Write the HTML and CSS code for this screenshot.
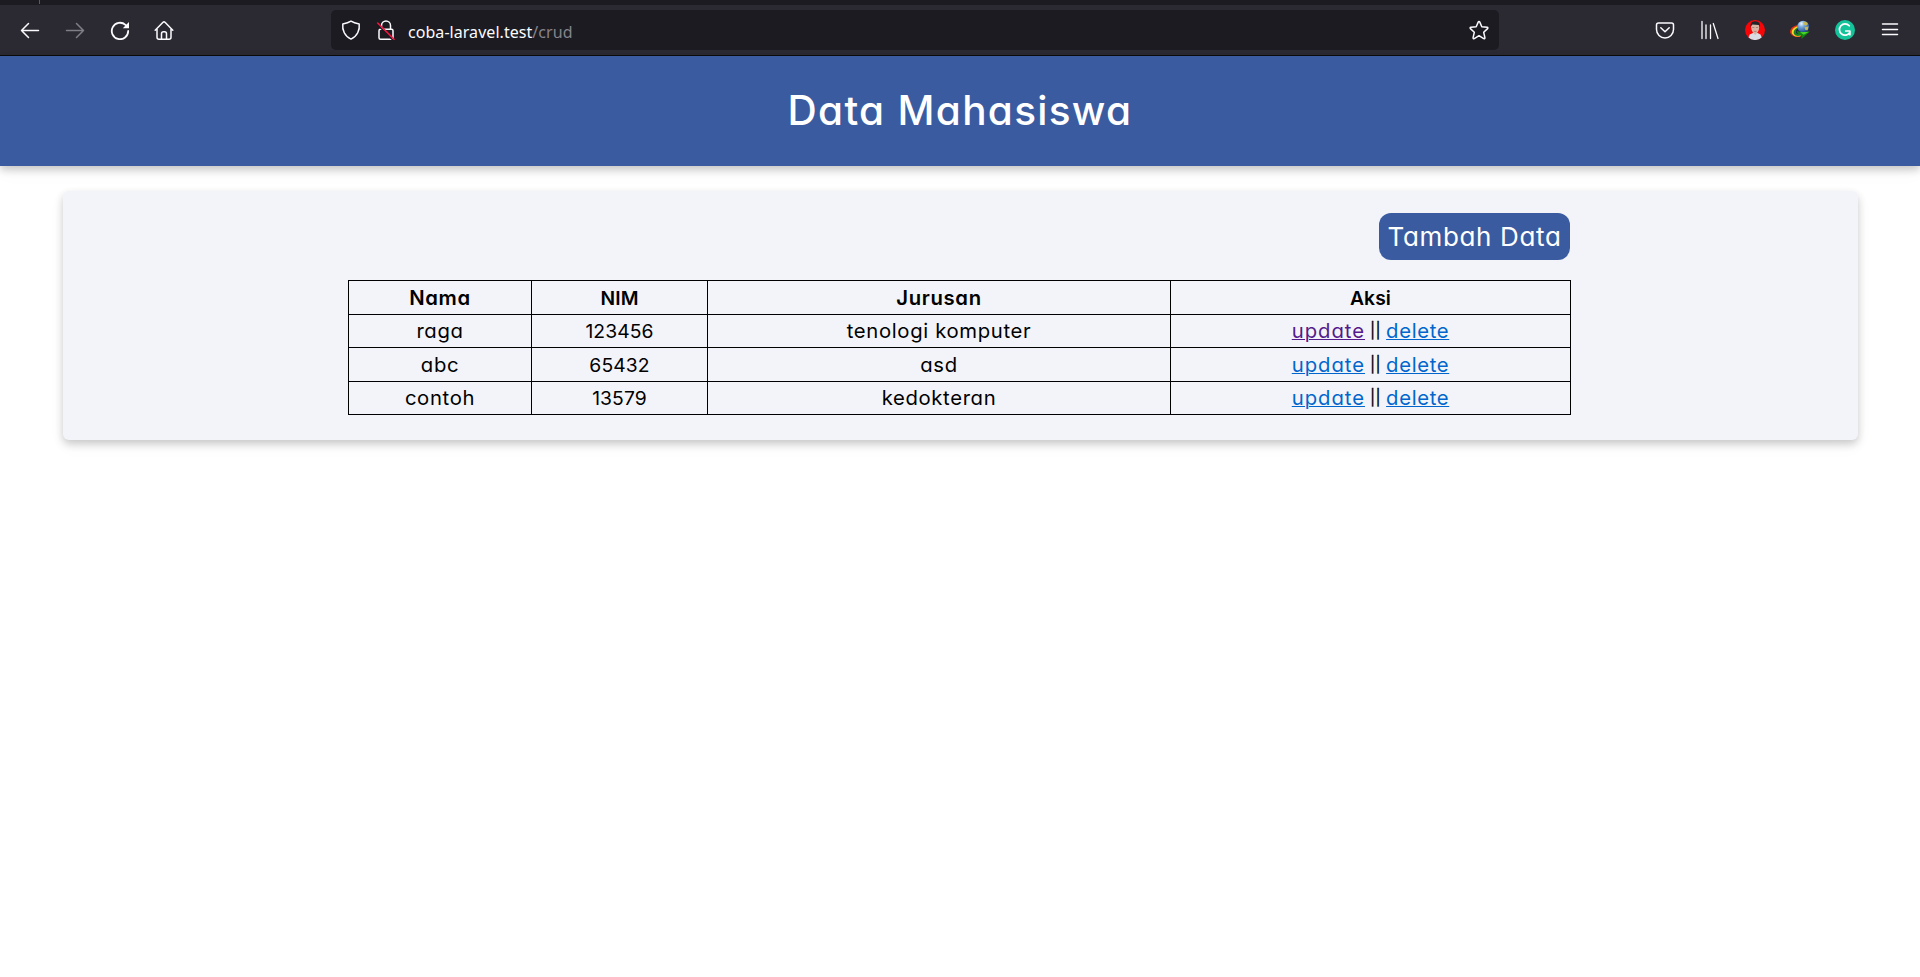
FILE: index.html
```html
<!DOCTYPE html>
<html lang="id">
<head>
<meta charset="utf-8">
<title>Data Mahasiswa</title>
<link rel="stylesheet" href="styles.css">
</head>
<body>
<div class="tabstrip"><span class="tab-edge"></span></div>
<nav class="toolbar">
  <div class="nav-buttons">
    <span class="tool"><svg viewBox="0 0 20 20"><path d="M18.500 10.500H1.500M8.500 3.500L1.500 10.500L8.500 17.500"/></svg></span>
    <span class="tool tool-off"><svg viewBox="0 0 20 20"><path d="M1.500 10.500H18.500M11.500 3.500l7 7L11.500 17.500"/></svg></span>
    <span class="tool"><svg class="bold" viewBox="0 0 20 20"><path d="M18.200 11a8.200 8.200 0 1 1-2.700-6.100L17 6.300"/><path class="solid" d="M19 2v6.200h-6.200z"/></svg></span>
    <span class="tool"><svg viewBox="0 0 20 20"><path d="M1.200 10.200L9 2.300q1-.9 2 0l7.800 7.900M3 9v8.200q0 2 2 2h10q2 0 2-2V9M7.500 19v-5.200q0-2 2-2h1q2 0 2 2V19"/></svg></span>
  </div>
  <div class="urlbar">
    <svg class="shield" viewBox="0 0 20 20"><path d="M10 1.200c2.500 1.600 5 2.200 8.200 2.700.8 6-2 12.500-8.200 15.200C3.800 16.400 1 9.900 1.800 3.900 5 3.400 7.500 2.800 10 1.200z"/></svg>
    <svg class="lock" viewBox="0 0 20 20"><path d="M5.500 9V5.500a4.500 4.500 0 0 1 9 0V9M4.500 9.200h11q1.500 0 1.500 1.500v7q0 1.500-1.500 1.500h-11q-1.500 0-1.500-1.500v-7q0-1.500 1.500-1.500z"/><path class="lock-gap" d="M1.500 4.700L16.500 19.700"/><path class="slash" d="M1.700 3L18 19.300"/></svg>
    <span class="address"><span class="host">coba-laravel.test</span><span class="path">/crud</span></span>
    <svg class="star" viewBox="0 0 20 20"><path d="M10 1.400q.5 0 .8.7l2 4.700 5.300.5q1.300.3.500 1.300l-3.900 3.700 1.200 5.400q0 1.300-1.200.9L10 15.700l-4.700 2.900q-1.200.4-1.200-.9l1.200-5.400L1.400 8.600q-.8-1 .5-1.300l5.300-.5 2-4.700q.3-.7.8-.7z"/></svg>
  </div>
  <div class="extensions">
    <span class="tool"><svg viewBox="0 0 20 20"><path d="M3.500 3h13q2 0 2 2v4.500a8.500 8.500 0 0 1-17 0V5q0-2 2-2zM5.800 7.800L10 11.800l4.200-4"/></svg></span>
    <span class="tool"><svg class="books" viewBox="0 0 20 20"><path d="M2 1.500v17M6 5v13.500M10.500 5v13.500M13.300 3.500l4.700 15"/></svg></span>
    <span class="tool"><svg class="picture" viewBox="0 0 20 20"><circle cx="10" cy="10" r="10" fill="#f80508"/><path d="M3.500 17.600L4.700 14.500 8 13h4.500l3 1.500 1.200 3A10 10 0 0 1 3.500 17.600z" fill="#d9dce2"/><path d="M6 7q0-4 4.200-4t4 4.300q0 3-1.600 5L10.200 15 8 12.700Q6.300 10.500 6 7z" fill="#d9b3a3"/><path d="M5.700 7.500Q4.700 1 10 1.200q5.800-.3 4.700 6.100L13.800 5 7.500 4.500 6.500 5.600z" fill="#20242a"/><path d="M7.600 7.500H9M11.300 7.500h1.500M9.200 11.400h2" stroke="#8f665b" stroke-width=".6"/></svg></span>
    <span class="tool"><svg class="picture" viewBox="0 0 20 20"><defs><radialGradient id="globe" cx=".35" cy=".25" r=".8"><stop offset="0" stop-color="#eaf6ff"/><stop offset=".35" stop-color="#78a9db"/><stop offset="1" stop-color="#143d86"/></radialGradient></defs><path d="M9 5C2 5.500-1 10 .5 13.500c2 3.500 7 4.500 11 2.500l-1.500-3C6 13.500 6 10 9 7z" fill="#e62d1c"/><path d="M8.500 6C3.500 7 1 10.500 2 13.500c2 3.500 6 3.500 9 2.500l-1-2C6 14 5.500 10.500 8.500 8z" fill="#f5dc20"/><path d="M8 7.600C4.500 9 3 11.500 4 14c1.500 2.500 4.500 2 6.500 1.500V13C7 13.500 6 10.500 8 9z" fill="#1d7d2e"/><path d="M8.500 8C6 9 5.500 12 6.500 13.500L10 14l.5-3z" fill="#14233f"/><circle cx="13.200" cy="6.700" r="6" fill="url(#globe)"/><path d="M13.500 2q3-1 4.500 2l-2 1.700-2-1zM14.500 7l4-.5-.8 3.800-2.300-.3z" fill="#c6b857"/><path d="M6.500 11q6 1.500 13.500.5l-8.500 7.500.2-3.300q-3.700-.7-5.200-4.700z" fill="#0f8512"/><path d="M10 12.300l9-.6-5.300 3z" fill="#4bd326"/></svg></span>
    <span class="tool"><svg class="picture" viewBox="0 0 20 20"><circle cx="10" cy="10" r="10" fill="#15c39a"/><path d="M14.200 5.800A5.600 5.600 0 1 0 14.800 12.500M10.700 11h4.200v3.700" fill="none" stroke="#fff" stroke-width="1.700"/></svg></span>
    <span class="tool"><svg class="menu" viewBox="0 0 20 20"><path d="M2.500 4h15M2.500 9.500h15M2.500 14.500h15"/></svg></span>
  </div>
</nav>
<header class="page-header"><h1>Data Mahasiswa</h1></header>
<main class="card">
  <div class="content">
    <div class="actions"><a class="add">Tambah Data</a></div>
    <table class="students">
      <colgroup><col class="col-name"><col class="col-nim"><col class="col-major"><col class="col-action"></colgroup>
      <tr class="tall"><th>Nama</th><th class="narrow">NIM</th><th>Jurusan</th><th class="narrow">Aksi</th></tr>
      <tr><td>raga</td><td class="narrow">123456</td><td>tenologi komputer</td><td><div class="links"><a class="update visited">update</a><span class="bars">||</span><a>delete</a></div></td></tr>
      <tr class="tall"><td>abc</td><td class="narrow">65432</td><td>asd</td><td><div class="links"><a class="update">update</a><span class="bars">||</span><a>delete</a></div></td></tr>
      <tr><td>contoh</td><td class="narrow">13579</td><td>kedokteran</td><td><div class="links"><a class="update">update</a><span class="bars">||</span><a>delete</a></div></td></tr>
    </table>
  </div>
</main>
</body>
</html>
```

FILE: styles.css
```css
* { box-sizing: border-box; }
body {
  margin: 0;
  min-height: 977px;
  background: #fff;
  color: #000;
  font-family: Inter, "Open Sans", sans-serif;
  font-feature-settings: "cv11" 1;
}

/* browser chrome */
.tabstrip { display: flex; height: 5px; background: #1c1b22; }
.tab-edge { width: 1px; height: 4px; margin-left: 39px; background: #5b5a63; }
.toolbar {
  display: flex;
  align-items: center;
  height: 51px;
  padding: 0 7.500px 1px 8px;
  background: #2b2a33;
  border-bottom: 1px solid #0c0c0d;
}
.nav-buttons, .extensions { display: flex; }
.nav-buttons { width: 323px; }
.extensions { margin-left: auto; }
.tool { display: flex; justify-content: center; width: 45px; }
.nav-buttons .tool { width: 44.700px; }
.tool-off { opacity: .4; }
svg {
  display: block;
  flex: none;
  width: 20px;
  height: 20px;
  fill: none;
  stroke: #fbfbfe;
  stroke-width: 1.500;
  stroke-linecap: round;
  stroke-linejoin: round;
}
.bold { stroke-width: 1.800; }
.solid { fill: #fbfbfe; stroke: none; }
.picture { stroke: none; }
.books { stroke-width: 1.300; }
.urlbar {
  display: flex;
  align-items: center;
  width: 1168px;
  height: 40px;
  padding: 0 10px;
  background: #1c1b22;
  border-radius: 5px;
}
.lock { margin-left: 15px; }
.lock-gap { stroke: #1c1b22; stroke-width: 1.500; }
.slash { stroke: #f5133f; stroke-width: 1.600; }
.address {
  margin: 4px auto 0 12px;
  font: 16px/22px "Noto Sans", sans-serif;
  letter-spacing: .05px;
  color: #fbfbfe;
}
.path { color: #85848b; }

/* page */
.page-header {
  display: flex;
  align-items: center;
  justify-content: center;
  height: 110px;
  background: #3b5ba1;
  box-shadow: 0 4px 8px rgba(0, 0, 0, .2), 0 6px 20px rgba(0, 0, 0, .03);
}
.page-header h1 {
  margin: 0 0 2px;
  color: #fff;
  font-size: 40.500px;
  font-weight: 500;
  letter-spacing: 1.300px;
}
.card {
  width: 1795px;
  height: 249px;
  margin: 25px 0 0 63px;
  padding-top: 22px;
  background: #f3f4f9;
  border-radius: 6px;
  box-shadow: 0 4px 8px rgba(0, 0, 0, .2), 0 6px 20px rgba(0, 0, 0, .03);
}
.content { width: 1223px; margin-left: 285px; }
.actions { display: flex; justify-content: flex-end; padding-right: 1px; }
.add {
  width: 191px;
  height: 47px;
  border-radius: 12px;
  background: #3b5ba1;
  color: #fff;
  font-size: 26px;
  line-height: 47px;
  text-align: center;
  white-space: nowrap;
  letter-spacing: .65px;
}
.students {
  width: 1223px;
  margin-top: 20px;
  table-layout: fixed;
  border-collapse: collapse;
  font-size: 20.300px;
  line-height: 28px;
  letter-spacing: .65px;
}
.col-name { width: 183px; }
.col-nim { width: 176px; }
.col-major { width: 463px; }
.col-action { width: 400px; }
.students th, .students td {
  height: 33px;
  padding: 0;
  border: 1px solid #000;
  text-align: center;
}
.students .tall th, .students .tall td { height: 34px; }
.students th { font-weight: 600; }
.students .narrow { font-size: 19.300px; letter-spacing: .1px; }
.links { display: flex; justify-content: center; }
.links .update { letter-spacing: .95px; }
.links .bars { margin: 0 5px 0 5px; font-size: 15.500px; letter-spacing: .4px; -webkit-text-stroke: .3px #000; }
.students a { color: #0066cc; text-decoration: underline; text-decoration-thickness: 1px; }
.students .visited { color: #551a8b; }
```
